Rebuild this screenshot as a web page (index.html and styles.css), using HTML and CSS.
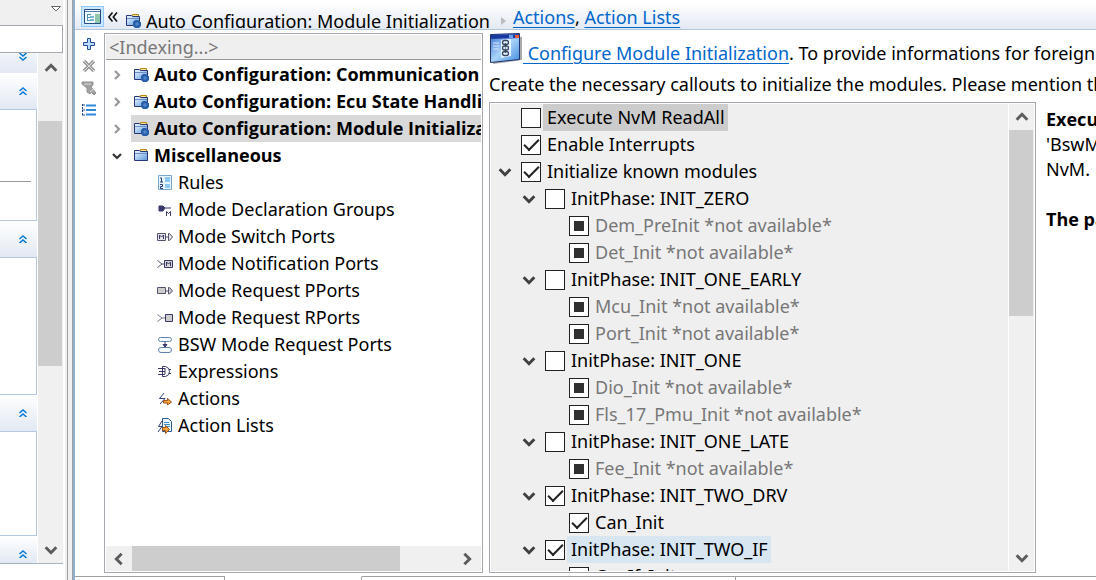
FILE: index.html
```
<!DOCTYPE html>
<html lang="en">
<head>
<meta charset="utf-8">
<title>Module Initialization</title>
<link rel="stylesheet" href="styles.css">
</head>
<body>
<svg class="defs" aria-hidden="true">
  <linearGradient id="blue" x1="0" y1="0" x2="1" y2="1"><stop offset="0" stop-color="#f2f9ff"/><stop offset="1" stop-color="#5b9bdc"/></linearGradient>
  <linearGradient id="window" x1="0" y1="0" x2="1" y2="1"><stop offset="0" stop-color="#3b6fd0"/><stop offset=".5" stop-color="#a9d3f8"/><stop offset="1" stop-color="#3f8be0"/></linearGradient>
  <symbol id="folder" viewBox="0 0 16 16"><path d="M7.500 3.500v-2h6v2" fill="#ffe9a0" stroke="#b8860b"/><path d="M1.500 12.500v-10h5l1 1h7v9z" fill="url(#blue)" stroke="#2a3575"/><path d="M2 5.500h12" stroke="#6d8fc4"/></symbol>
  <symbol id="folder-gear" viewBox="0 0 16 16"><use href="#folder"/><path d="M10 7h3l2 2 1 0v4l-2 2h-4l-2-2v-4z" fill="#285faa"/><path d="M10 11h4M12 9v4" stroke="#5e90cf"/></symbol>
  <symbol id="up" viewBox="0 0 12 12"><path d="M2 8 6 4l4 4" fill="none" stroke="currentColor" stroke-width="2.200"/></symbol>
  <symbol id="double" viewBox="0 0 8 8"><path d="M.5 4 4 1l3.500 3M.5 8 4 5l3.500 3" fill="none" stroke="#0078d7" stroke-width="1.500"/></symbol>
</svg>
<div class="app">
  <aside class="side">
    <div class="side-top"><svg width="10" height="6" viewBox="0 0 10 6"><path d="M.5.5h9L5 5z" fill="#fff" stroke="#666"/></svg></div>
    <input class="search" type="text" aria-label="Search">
    <div class="side-scroll">
      <div class="sections">
        <button class="section-head head-cut" aria-label="Expand section"><svg class="flip"><use href="#double"/></svg></button>
        <button class="section-head" aria-label="Collapse section"><svg><use href="#double"/></svg></button>
        <div class="section-body body-lined"><hr></div>
        <button class="section-head" aria-label="Collapse section"><svg><use href="#double"/></svg></button>
        <div class="section-body body-tall"></div>
        <button class="section-head" aria-label="Collapse section"><svg><use href="#double"/></svg></button>
        <div class="section-body"></div>
        <button class="section-head head-last" aria-label="Collapse section"><svg><use href="#double"/></svg></button>
      </div>
      <div class="vbar"><button aria-label="Scroll up"><svg><use href="#up"/></svg></button><div class="thumb side-thumb"></div><button class="end" aria-label="Scroll down"><svg class="flip"><use href="#up"/></svg></button></div>
    </div>
  </aside>
  <div class="sash"></div>
  <main class="editor">
    <header class="crumbs">
      <button class="outline" aria-label="Toggle outline"><svg width="17" height="15" viewBox="0 0 17 15"><path d="M.5.500h16v14H.5z" fill="#f6fbff" stroke="#244d86"/><path d="M1 2.500h15" stroke="#4e7eb8"/><path d="M11 5h5v9h-5z" fill="#8fc6ad"/><path d="M3.500 5v7M3 5.500h4M4 8.500h5M4 11.500h5" stroke="#4b92c6" fill="none"/><path d="M6 7h4v2H6zM6 10h4v2H6z" fill="#79b8dc"/></svg></button>
      <svg class="back" width="10" height="10" viewBox="0 0 10 10"><path d="M4.500.5.800 5l3.700 4.500M9 .5 5.300 5 9 9.500" fill="none" stroke="#111" stroke-width="1.600"/></svg>
      <svg class="icon crumb-icon"><use href="#folder-gear"/></svg>
      <span class="crumb-text">Auto Configuration: Module Initialization</span>
      <svg class="crumb-arrow" width="5" height="8" viewBox="0 0 5 8"><path d="M0 0l5 4-5 4z" fill="#bbb"/></svg>
      <span class="crumb-links"><a href="#actions">Actions</a>, <a href="#lists">Action Lists</a></span>
    </header>
    <div class="work">
      <nav class="tools">
        <button aria-label="Add"><svg viewBox="0 0 16 16"><path d="M6.500 2.500h3v4h4v3h-4v4h-3v-4h-4v-3h4z" fill="#b9ddff" stroke="#244a9a"/></svg></button>
        <button aria-label="Delete"><svg viewBox="0 0 16 16"><path d="M3 3l10 10M13 3 3 13" stroke="#999" stroke-width="3.600"/><path d="M3 3l10 10M13 3 3 13" stroke="#ddd"/></svg></button>
        <button aria-label="Clear filter"><svg viewBox="0 0 16 16"><path d="M1 2h11v3l-2 2 5 6-2 2-3-3-1 2-3-2V8L1 4z" fill="#a0a0a0" stroke="#929292"/><path d="M3 4h7M9 12l5-4" stroke="#ddd"/></svg></button>
        <button aria-label="List"><svg viewBox="0 0 16 16"><path d="M5 3.500h10M5 8h10M5 12.500h10" stroke="#2f88dc" stroke-width="2"/><path d="M1.500 2v12" stroke="#27478a" stroke-dasharray="2 1"/><path d="M1 3h3M1 8h3M1 13h3" stroke="#27478a"/></svg></button>
      </nav>
      <section class="tree">
        <div class="indexing">&lt;Indexing...&gt;</div>
        <ul class="tree-list">
          <li class="group"><button class="twist" aria-label="Expand"><svg class="right"><use href="#up"/></svg></button><span class="pick"><svg class="icon"><use href="#folder-gear"/></svg>Auto Configuration: Communication</span></li>
          <li class="group"><button class="twist" aria-label="Expand"><svg class="right"><use href="#up"/></svg></button><span class="pick"><svg class="icon"><use href="#folder-gear"/></svg>Auto Configuration: Ecu State Handling</span></li>
          <li class="group"><button class="twist" aria-label="Expand"><svg class="right"><use href="#up"/></svg></button><span class="pick selected"><svg class="icon"><use href="#folder-gear"/></svg>Auto Configuration: Module Initialization</span></li>
          <li class="group"><button class="twist open" aria-label="Collapse"><svg class="flip"><use href="#up"/></svg></button><span class="pick"><svg class="icon"><use href="#folder"/></svg>Miscellaneous</span></li>
          <li class="leaf"><svg class="icon" viewBox="0 0 16 16"><path d="M1.500 .5h13v14h-13z" fill="#e8f4ff" stroke="#7aa5d0"/><path d="M8 2h5v5H8zM8 9h5v4H8z" fill="#8ccaf4"/><path d="M3 3h1.500v4M3 7h3M3 9.500h2.500v2H3.500v2H6" fill="none" stroke="#293b73"/></svg>Rules</li>
          <li class="leaf"><svg class="icon" viewBox="0 0 16 16"><path d="M2 4h4l2 2-2 3H2zM8 6h6" fill="#39386b" stroke="#39386b"/><path d="M9.500 14V9.500l2 2 2-2V14" fill="none" stroke="#39386b"/></svg>Mode Declaration Groups</li>
          <li class="leaf"><svg class="icon" viewBox="0 0 16 16"><path d="M.5 4.500h8v7h-8zM11.500 4.500h1L15.500 8l-3 3.500h-1zM9 8h2" fill="#e5e5e5" stroke="#55536f"/><path d="M2.500 10V6l2 2 2-2v4" fill="none" stroke="#39386b"/></svg>Mode Switch Ports</li>
          <li class="leaf"><svg class="icon" viewBox="0 0 16 16"><path d="M.5 4.500 5 8 .5 11.500M5 8h2" fill="none" stroke="#55536f"/><path d="M7.500 4.500h8v7h-8z" fill="#d4d4d4" stroke="#39386b"/><path d="M9.500 10V6l2 2 2-2v4" fill="none" stroke="#39386b"/></svg>Mode Notification Ports</li>
          <li class="leaf"><svg class="icon" viewBox="0 0 16 16"><path d="M.5 4.500h8v6h-8zM11.500 4.500h1L15.500 8l-3 3h-1zM9 8h2" fill="#ccc" stroke="#55536f"/></svg>Mode Request PPorts</li>
          <li class="leaf"><svg class="icon" viewBox="0 0 16 16"><path d="M.5 4.500 5 8 .5 11.500M5 8h3" fill="none" stroke="#77758c"/><path d="M8.500 4.500h7v7h-7z" fill="#ccc" stroke="#39386b"/></svg>Mode Request RPorts</li>
          <li class="leaf"><svg class="icon" viewBox="0 0 16 16"><rect x="1.500" y=".5" width="13" height="4" rx="2" fill="#f5fbff" stroke="#5f82ab"/><rect x="1.500" y="10.500" width="13" height="5" rx="2.500" fill="#f5fbff" stroke="#5f82ab"/><path d="M8 5v4M6 7.500h4L8 10z" fill="#39386b" stroke="#39386b"/></svg>BSW Mode Request Ports</li>
          <li class="leaf"><svg class="icon" viewBox="0 0 16 16"><path d="M5.500 2.500h3q4 1 4 5t-4 5h-3zM1 4.500h7M2 7.500h6M1 10.500h7M8 4v6M12 5.500h2M12 9.500h2" fill="none" stroke="#39386b"/></svg>Expressions</li>
          <li class="leaf"><svg class="icon" viewBox="0 0 16 16"><path d="M7 2 2.500 7.500H8L3 13" fill="none" stroke="#2f3f83"/><path d="M6.500 9.500h4v-2l4 3.500-4 3v-2h-4z" fill="#f5a238" stroke="#9b5419"/></svg>Actions</li>
          <li class="leaf"><svg class="icon" viewBox="0 0 16 16"><path d="M5.500 .5h6l3 3v10h-9z" fill="#e8f5ff" stroke="#315c91"/><path d="M7 4.500h5M7 6.500h6M10 8.500h3" stroke="#3b8fd0"/><path d="M5 3 1.500 8.500H5L1 14" fill="none" stroke="#2f3f83"/><path d="M5.500 9.500h3v-2l4 4-4 4v-3h-3z" fill="#f5a238" stroke="#9b5419"/></svg>Action Lists</li>
        </ul>
        <div class="hbar"><button aria-label="Scroll left"><svg class="left"><use href="#up"/></svg></button><div class="thumb h-thumb"></div><button class="end" aria-label="Scroll right"><svg class="right"><use href="#up"/></svg></button></div>
      </section>
      <section class="content">
        <p class="intro"><svg class="window-icon" width="34" height="32" viewBox="0 0 34 32"><path d="M3 3l30 1v23L4 31z" fill="#aaa"/><path d="M1.500 1.500l29-1v26l-29 3z" fill="url(#window)" stroke="#213470"/><path d="M2 2l28-1v4L2 6z" fill="#183aa0"/><path d="M26 2h4v3h-4z" fill="#ef593b"/><path d="M20 2h4v3h-4z" fill="#6fa0e8"/><path d="M4 10h6M4 13h6M4 16h6" stroke="#d8ebff"/><path d="M12 7l10-1v17l-10 2z" fill="#e5f3ff"/><g fill="none" stroke="#37465f" stroke-width="1.300"><rect x="13.500" y="7.500" width="6" height="4" rx="2"/><rect x="13.500" y="13" width="6" height="4" rx="2"/><rect x="13.500" y="18.500" width="6" height="4" rx="2"/><path d="M16.500 10v4.500M16.500 15.500v4.500"/></g></svg><span><a class="configure" href="#configure">&nbsp;Configure Module Initialization</a>. To provide informations for foreign modules</span></p>
        <p class="second">Create the necessary callouts to initialize the modules. Please mention the order</p>
        <div class="details">
          <div class="modules">
            <ul class="module-list">
              <li class="l1"><input type="checkbox" id="m1"><label class="gray" for="m1">Execute NvM ReadAll</label></li>
              <li class="l1"><input type="checkbox" id="m2" checked><label for="m2">Enable Interrupts</label></li>
              <li class="l1"><button class="caret" aria-label="Collapse"><svg class="flip"><use href="#up"/></svg></button><input type="checkbox" id="m3" checked><label for="m3">Initialize known modules</label></li>
              <li class="l2"><button class="caret" aria-label="Collapse"><svg class="flip"><use href="#up"/></svg></button><input type="checkbox" id="m4"><label for="m4">InitPhase: INIT_ZERO</label></li>
              <li class="l3"><input class="mixed" type="checkbox" id="m5"><label for="m5">Dem_PreInit *not available*</label></li>
              <li class="l3"><input class="mixed" type="checkbox" id="m6"><label for="m6">Det_Init *not available*</label></li>
              <li class="l2"><button class="caret" aria-label="Collapse"><svg class="flip"><use href="#up"/></svg></button><input type="checkbox" id="m7"><label for="m7">InitPhase: INIT_ONE_EARLY</label></li>
              <li class="l3"><input class="mixed" type="checkbox" id="m8"><label for="m8">Mcu_Init *not available*</label></li>
              <li class="l3"><input class="mixed" type="checkbox" id="m9"><label for="m9">Port_Init *not available*</label></li>
              <li class="l2"><button class="caret" aria-label="Collapse"><svg class="flip"><use href="#up"/></svg></button><input type="checkbox" id="m10"><label for="m10">InitPhase: INIT_ONE</label></li>
              <li class="l3"><input class="mixed" type="checkbox" id="m11"><label for="m11">Dio_Init *not available*</label></li>
              <li class="l3"><input class="mixed" type="checkbox" id="m12"><label for="m12">Fls_17_Pmu_Init *not available*</label></li>
              <li class="l2"><button class="caret" aria-label="Collapse"><svg class="flip"><use href="#up"/></svg></button><input type="checkbox" id="m13"><label for="m13">InitPhase: INIT_ONE_LATE</label></li>
              <li class="l3"><input class="mixed" type="checkbox" id="m14"><label for="m14">Fee_Init *not available*</label></li>
              <li class="l2"><button class="caret" aria-label="Collapse"><svg class="flip"><use href="#up"/></svg></button><input type="checkbox" id="m15" checked><label for="m15">InitPhase: INIT_TWO_DRV</label></li>
              <li class="l3"><input type="checkbox" id="m16" checked><label for="m16">Can_Init</label></li>
              <li class="l2"><button class="caret" aria-label="Collapse"><svg class="flip"><use href="#up"/></svg></button><input type="checkbox" id="m17" checked><label class="hover" for="m17">InitPhase: INIT_TWO_IF</label></li>
              <li class="l3"><input type="checkbox" id="m18"><label for="m18">CanIf_Init</label></li>
            </ul>
            <div class="vbar"><button aria-label="Scroll up"><svg><use href="#up"/></svg></button><div class="thumb module-thumb"></div><button class="end" aria-label="Scroll down"><svg class="flip"><use href="#up"/></svg></button></div>
          </div>
          <div class="help"><b>Execute NvM</b><br>'BswM will<br>NvM.<br><br><b>The parameter</b></div>
        </div>
      </section>
    </div>
    <footer class="tabs"><div class="tab-first"></div><div class="tab-active"></div><div class="tab-next"></div><div class="tab-rest"></div></footer>
  </main>
</div>
</body>
</html>
```

FILE: styles.css
```
* { box-sizing: border-box; }
body { margin: 0; background: #fff; color: #000; font: 18px/27px "Noto Sans", "Open Sans", sans-serif; }
button { border: 0; padding: 0; background: none; color: inherit; display: flex; align-items: center; justify-content: center; flex: none; }
ul, p { margin: 0; padding: 0; list-style: none; }
a { color: #0066cc; text-decoration: underline; text-decoration-thickness: 1px; text-underline-offset: 3px; }
svg { display: block; flex: none; }
.defs { position: absolute; width: 0; height: 0; }
.icon { width: 16px; height: 16px; }
.flip { transform: rotate(180deg); }
.right { transform: rotate(90deg); }
.left { transform: rotate(-90deg); }

.app { display: flex; height: 100vh; overflow: hidden; }
.side { width: 63px; flex: none; display: flex; flex-direction: column; padding-bottom: 16px; }
.side-top { height: 25px; flex: none; background: #f0f0f0; padding: 6px 2px 0 0; display: flex; justify-content: flex-end; }
.search { width: 100%; height: 28px; flex: none; border: 1px solid #a5a8ae; border-left: 0; background: #fff; }
.side-scroll { display: flex; flex: 1; min-height: 0; border-bottom: 1px solid #a5b4c4; }
.sections { flex: 1; display: flex; flex-direction: column; margin-right: 1px; overflow: hidden; }
.section-head { width: 100%; height: 37px; border-bottom: 1px solid #b4c8df; background: linear-gradient(#fff, #e2e9f3); justify-content: flex-end; padding-right: 10px; }
.section-head svg { width: 8px; height: 8px; }
.head-cut { height: 20px; border: 0; align-items: flex-start; background: linear-gradient(#f1f4f9, #e2e9f3); }
.section-body { height: 104px; flex: none; border: solid #b4c8df; border-width: 0 1px 1px 0; }
.body-lined { height: 111px; padding: 71px 5px 0 0; }
.body-lined hr { margin: 0; border: 0; height: 1px; background: #999; }
.body-tall { height: 137px; }
.head-last { flex: 1; border: 0; padding-top: 8px; }

.vbar { width: 25px; flex: none; display: flex; flex-direction: column; background: #f0f0f0; color: #5c5c5c; }
.vbar button { height: 26px; }
.side .vbar button { height: 30px; }
.vbar svg, .hbar svg { width: 16px; height: 16px; }
.thumb { background: #cdcdcd; flex: none; }
.vbar .end, .side .vbar .end { height: 26px; margin-top: auto; }
.side-thumb { width: 24px; height: 245px; margin-top: 38px; }
.sash { width: 12px; flex: none; background: linear-gradient(90deg, #fff 0 2px, #f0f0f0 2px 4px, #a0a0a0 4px 5px, #f0f0f0 5px 9px, #a0a0a0 9px 10px, #91b0cf 10px); }

.editor { flex: 1; min-width: 0; display: flex; flex-direction: column; }
.crumbs { height: 30px; flex: none; border-bottom: 1px solid #b4c8da; background: linear-gradient(#fff 10%, #e3e9f3); display: flex; align-items: flex-start; padding-left: 6px; white-space: nowrap; overflow: hidden; }
.outline { width: 23px; height: 21px; margin-top: 6px; background: #cce8ff; border: 1px solid #92c8f5; }
.back { margin: 12px 0 0 4px; }
.crumb-icon { margin: 13px 0 0 7px; }
.crumb-text { margin: 8px 0 0 5px; height: 20px; overflow: hidden; }
.crumb-arrow { margin: 17px 7px 0 11px; }
.crumb-links { margin-top: 4px; }

.work { flex: 1; min-height: 0; display: flex; padding-top: 3px; }
.tools { width: 29px; flex: none; display: flex; flex-direction: column; gap: 6px; padding: 3px 0 0 6px; }
.tools button { width: 16px; height: 16px; }
.tools svg { width: 16px; height: 16px; }
.tree { width: 379px; flex: none; border: 1px solid #a5a8ae; padding: 1px; display: flex; flex-direction: column; margin-right: 6px; white-space: nowrap; overflow: hidden; }
.indexing { height: 25px; flex: none; line-height: 24px; background: #efefef; border-bottom: 1px solid #999; color: #777; padding-left: 3px; }
.tree-list { flex: 1; min-height: 0; padding-top: 1px; overflow: hidden; }
.group { display: flex; font-family: "Open Sans", "Noto Sans", sans-serif; font-weight: 700; }
.twist { width: 25px; color: #999; padding-right: 3px; }
.twist svg { width: 12px; height: 12px; }
.open { color: #333; }
.pick { display: flex; flex: 1; align-items: center; gap: 5px; padding-left: 2px; }
.selected { background: #d9d9d9; }
.leaf { display: flex; align-items: center; gap: 5px; padding-left: 51px; }
.hbar { height: 25px; flex: none; display: flex; background: #f0f0f0; color: #5c5c5c; }
.hbar button { width: 26px; }
.h-thumb { width: 268px; }
.hbar .end { margin: 0 1px 0 auto; }

.content { flex: 1; min-width: 0; display: flex; flex-direction: column; overflow: hidden; }
.intro, .second { white-space: nowrap; flex: none; }
.intro { display: flex; height: 38px; }
.intro span { padding-top: 7px; }
.second { height: 31px; }
.details { flex: 1; min-height: 0; display: flex; }
.modules { flex: 1; min-width: 0; display: flex; border: 1px solid #a5a8ae; background: #fff; padding: 1px; }
.module-list { flex: 1; margin-right: 1px; background: #efefef; overflow: hidden; white-space: nowrap; }
.module-list li { height: 27px; display: flex; align-items: center; }
.l1 { padding-left: 30px; }
.l2 { padding-left: 54px; }
.l3 { padding-left: 78px; }
.caret { width: 16px; height: 16px; margin-left: -24px; margin-right: 8px; color: #404040; }
.caret svg { width: 16px; height: 16px; }
.module-list input { appearance: none; width: 20px; height: 20px; margin: 0 2px 0 0; border: 1px solid #222; background: #fff; flex: none; display: grid; place-items: center; }
.module-list input:checked::before { content: ""; width: 13px; height: 6px; border: solid #222; border-width: 0 0 2px 2px; transform: translateY(-2px) rotate(-45deg); }
.module-list .mixed::before { content: ""; width: 10px; height: 10px; background: #303030; }
.mixed + label { color: #777; }
.module-list label { padding: 0 3px 0 4px; }
.module-list .gray { background: #ccc; }
.module-list .hover { background: #d8e6f2; }
.module-thumb { width: 24px; height: 186px; }
.help { width: 60px; flex: none; padding: 5px 0 0 10px; line-height: 25px; white-space: nowrap; overflow: hidden; }
.help b { font-family: "Open Sans", "Noto Sans", sans-serif; font-weight: 700; }

.tabs { height: 7px; flex: none; display: flex; padding-top: 3px; }
.tabs div { border-top: 1px solid #a0a0a0; border-right: 1px solid #a0a0a0; }
.tabs .tab-first { width: 150px; }
.tabs .tab-active { width: 137px; border-top-color: #fff; }
.tabs .tab-next { width: 374px; }
.tabs .tab-rest { flex: 1; border-right: 0; }
```
